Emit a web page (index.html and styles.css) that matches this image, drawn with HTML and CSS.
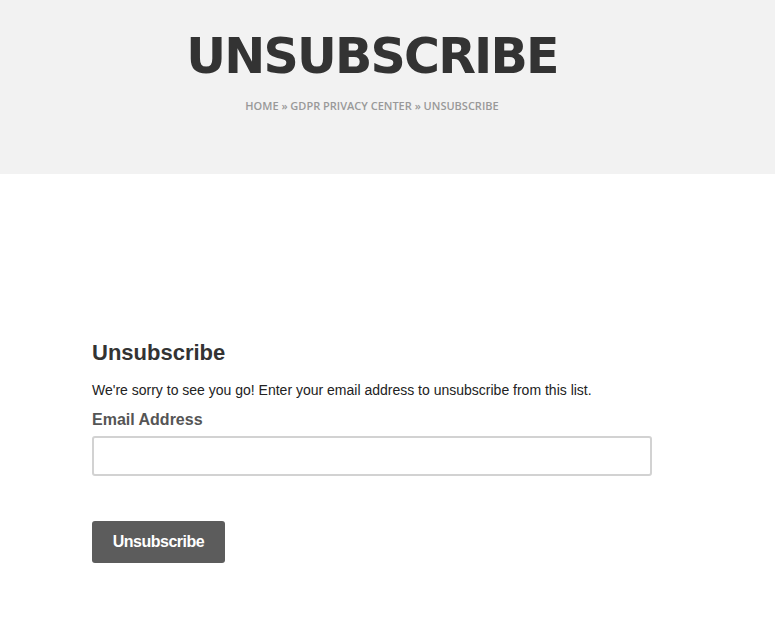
FILE: index.html
```html
<!DOCTYPE html>
<html>
<head>
<meta charset="utf-8">
<link rel="stylesheet" href="styles.css">
</head>
<body>
<header class="hero">
  <h1 class="hero-title">UNSUBSCRIBE</h1>
  <div class="crumbs">HOME » GDPR PRIVACY CENTER » UNSUBSCRIBE</div>
</header>
<main class="content">
  <h2 class="form-title">Unsubscribe</h2>
  <p class="intro">We're sorry to see you go! Enter your email address to unsubscribe from this list.</p>
  <label class="label" for="email">Email Address</label>
  <input class="field" id="email" type="email">
  <button class="btn" type="button">Unsubscribe</button>
</main>
</body>
</html>
```
FILE: styles.css
```css
html, body { margin: 0; padding: 0; background: #fff; }
body { font-family: "Liberation Sans", Arial, sans-serif; color: #333; }
.hero {
  background: #f2f2f2;
  height: 174px;
  box-sizing: border-box;
  padding: 29px 31px 0 0;
  text-align: center;
}
.hero-title {
  margin: 0;
  font-family: "DejaVu Sans", sans-serif;
  font-weight: 700;
  font-size: 49px;
  line-height: 56px;
  color: #333;
  letter-spacing: -1.8px;
}
.crumbs {
  margin-top: 13px;
  font-family: "Open Sans", sans-serif;
  font-weight: 600;
  font-size: 11px;
  color: #999;
}
.content {
  padding: 166px 0 0 92px;
  width: 560px;
}
.form-title {
  margin: 0;
  font-size: 22px;
  line-height: 26px;
  font-weight: 700;
  color: #333;
}
.intro {
  margin: 15px 0 0;
  font-size: 14px;
  line-height: 18px;
  color: #222;
}
.label {
  display: block;
  margin-top: 11px;
  font-size: 16px;
  font-weight: 700;
  line-height: 20px;
  color: #555;
}
.field {
  display: block;
  margin-top: 6px;
  width: 560px;
  height: 40px;
  box-sizing: border-box;
  border: 2px solid #d2d2d2;
  border-radius: 3px;
  background: #fff;
  outline: none;
}
.btn {
  display: block;
  margin-top: 45px;
  width: 133px;
  height: 42px;
  border: none;
  border-radius: 3px;
  background: #5c5c5c;
  color: #fff;
  font-family: "Liberation Sans", Arial, sans-serif;
  font-size: 16px;
  font-weight: 600;
  letter-spacing: -0.5px;
}
```
